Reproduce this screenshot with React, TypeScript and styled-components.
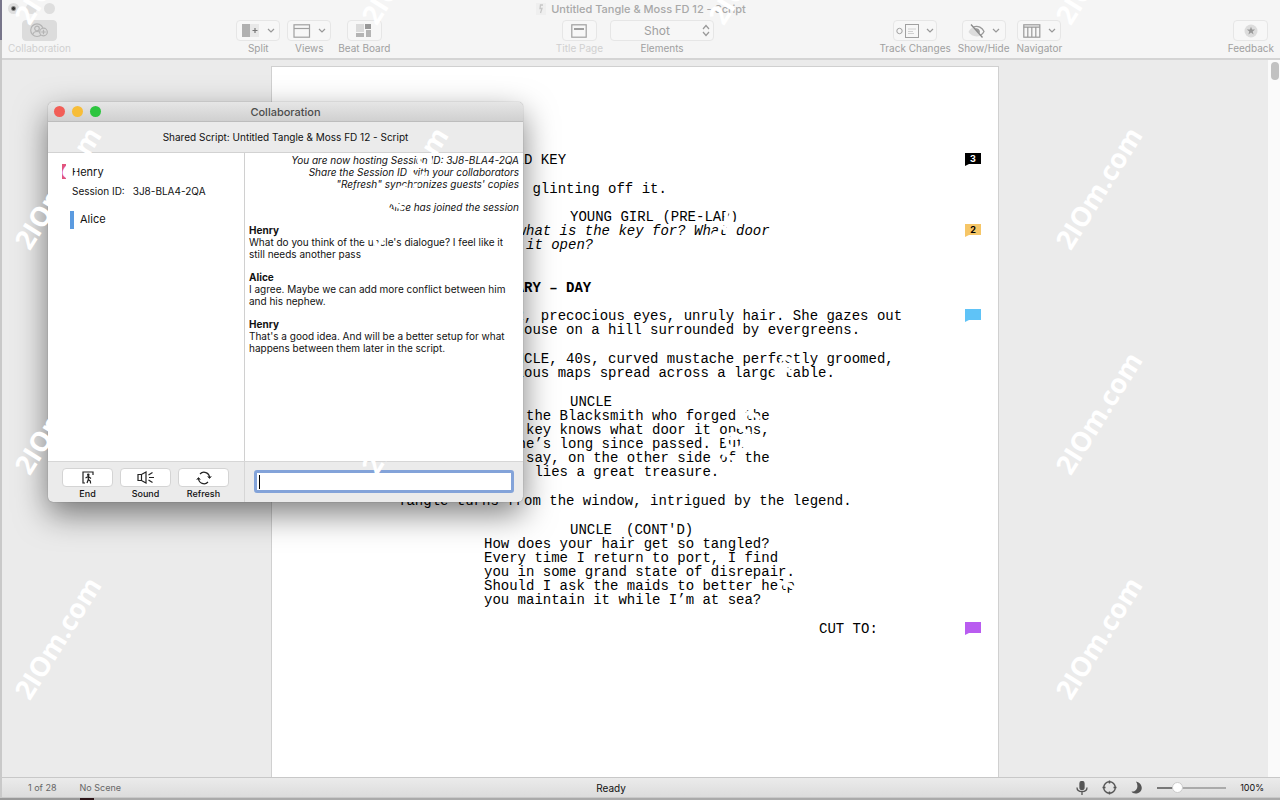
import React from "react";
import styled, { createGlobalStyle, css } from "styled-components";

const ui = `Inter, "Liberation Sans", sans-serif`;
const mono = `"Courier New", "Liberation Mono", monospace`;

const GlobalStyle = createGlobalStyle`
  *, *::before, *::after { box-sizing: border-box; }
  body { margin: 0; background: #a9a9a9; font-family: ${ui}; overflow: hidden; }
  button, input, select { font-family: inherit; margin: 0; }
`;

const Desktop = styled.div`
  position: relative;
  min-height: 100vh;
  display: flex;
  flex-direction: column;
  overflow: hidden;
  padding: 0 0 3px 2px;
  background: linear-gradient(90deg, #999 0 80px, #2c1417 80px 94px, #aaa 94px) bottom / 100% 2px no-repeat,
    linear-gradient(#77758a 0 40px, #c9c9c9 40px);
`;

/* ---------- main window chrome ---------- */

const Chrome = styled.header`
  background: #f5f5f5;
  border-bottom: 2px solid #d4d4d4;
  padding: 0 6px 0 6px;
  height: 60px;
`;

const TitleRow = styled.div`
  display: grid;
  grid-template-columns: 1fr auto 1fr;
  align-items: center;
  height: 17px;
  margin-bottom: 3px;
`;

const Lights = styled.div<{ $gap: number }>`
  display: flex;
  gap: ${(p) => p.$gap}px;
`;

const Light = styled.button<{ $color: string; $dot?: boolean }>`
  width: 11px;
  height: 11px;
  padding: 0;
  border: 0;
  border-radius: 50%;
  background: ${(p) => (p.$dot ? `radial-gradient(circle, #333 0 1px, ${p.$color} 3px)` : p.$color)};
`;

const WindowTitle = styled.h1`
  display: flex;
  align-items: center;
  gap: 5px;
  margin: 0;
  font-size: 11px;
  line-height: 16px;
  font-weight: 500;
  color: #a8a8a8;
`;

const Toolbar = styled.nav`
  display: flex;
  justify-content: space-between;
`;

const Group = styled.div<{ $gap: number }>`
  display: flex;
  gap: ${(p) => p.$gap}px;
`;

const Tool = styled.label<{ $dim?: boolean }>`
  display: flex;
  flex-direction: column;
  align-items: center;
  gap: 1px;
  font-size: 10px;
  line-height: 12px;
  color: ${(p) => (p.$dim ? "#d0d0d0" : "#a0a0a0")};
  white-space: nowrap;
`;

const ToolButton = styled.button<{ $wide?: boolean; $pressed?: boolean }>`
  display: flex;
  align-items: center;
  justify-content: center;
  gap: 7px;
  width: ${(p) => (p.$wide ? 44 : 35)}px;
  height: 21px;
  padding: 0;
  border: 1px solid ${(p) => (p.$pressed ? "#dcdcdc" : "#e6e6e6")};
  border-radius: 4px;
  background: ${(p) => (p.$pressed ? "#dcdcdc" : "#f7f7f7")};
`;

const SelectWrap = styled.span`
  position: relative;
  display: block;
  color: #a0a0a0;
`;

const Select = styled.select`
  appearance: none;
  display: block;
  width: 104px;
  height: 21px;
  padding: 0 10px 0 0;
  border: 1px solid #e6e6e6;
  border-radius: 4px;
  background: #f7f7f7;
  color: #a0a0a0;
  font-size: 12px;
  text-align: center;
  text-align-last: center;
`;

const SelectArrows = styled.svg`
  position: absolute;
  right: 4px;
  top: 4px;
  pointer-events: none;
`;

/* ---------- document ---------- */

const Workspace = styled.main`
  flex: 1;
  display: flex;
  background: #ebebeb;
`;

const Canvas = styled.div`
  flex: 1;
  display: flex;
  justify-content: center;
  padding-top: 6px;
`;

const Scroll = styled.div`
  width: 12px;
  padding: 2px 1px 0 3px;
  background: #fafafa;
`;

const Thumb = styled.div`
  height: 18px;
  border-radius: 4px;
  background: #c1c1c1;
`;

const Page = styled.article`
  width: 728px;
  padding: 86px 17px 0 0;
  background: #fff;
  border: 1px solid #d0d0d0;
  border-bottom: 0;
  font-family: ${mono};
  font-size: 14px;
  line-height: 14px;
  color: #000;
`;

type Kind = "action" | "heading" | "character" | "dialogue" | "lyric" | "transition";

const indent: Record<Kind, number> = {
  action: 126,
  heading: 126,
  character: 298,
  dialogue: 212,
  lyric: 212,
  transition: 547,
};

const Block = styled.div<{ $kind: Kind; $space?: number }>`
  display: flex;
  justify-content: space-between;
  padding-left: ${(p) => indent[p.$kind]}px;
  margin-top: ${(p) => p.$space ?? 0}px;
  ${(p) => p.$kind === "heading" && css`font-weight: 700;`}
  ${(p) => p.$kind === "lyric" && css`font-style: italic;`}
`;

const Lines = styled.p`
  display: flex;
  gap: 14px;
  margin: 0;
  white-space: pre;
`;

const Note = styled.button<{ $color: string; $ink?: string }>`
  width: 16px;
  height: 13px;
  padding: 0 0 2px;
  border: 0;
  background: ${(p) => p.$color};
  color: ${(p) => p.$ink ?? "#000"};
  clip-path: polygon(0 0, 100% 0, 100% 11px, 4px 11px, 0 100%);
  font: 700 9px/11px ${ui};
  text-align: center;
`;

/* ---------- status bar ---------- */

const Status = styled.footer`
  display: grid;
  grid-template-columns: 1fr auto 1fr;
  align-items: center;
  height: 20px;
  padding: 0 16px 0 26px;
  border-top: 1px solid #c8c8c8;
  background: linear-gradient(#ebebeb, #dcdcdc);
  font-size: 9px;
  line-height: 12px;
  color: #666;
`;

const StatusLeft = styled.div`
  display: flex;
  gap: 23px;
`;

const StatusMid = styled.div`
  margin-right: 70px;
  font-size: 10px;
  color: #111;
`;

const StatusRight = styled.div`
  display: flex;
  justify-content: flex-end;
  align-items: center;
  gap: 14px;
  color: #111;
`;

const IconButton = styled.button`
  display: flex;
  padding: 0;
  border: 0;
  background: none;
`;

const Zoom = styled.input`
  appearance: none;
  width: 69px;
  height: 12px;
  background: linear-gradient(90deg, #777 0 20px, #aaa 20px) center / 100% 2px no-repeat;
  &::-webkit-slider-thumb {
    appearance: none;
    width: 11px;
    height: 11px;
    border-radius: 50%;
    background: #fff;
    border: 1px solid #ccc;
  }
`;

/* ---------- collaboration window ---------- */

const Dialog = styled.section`
  position: absolute;
  left: 48px;
  top: 102px;
  width: 475px;
  border-radius: 5px;
  overflow: hidden;
  background: #ebebeb;
  color: #111;
  box-shadow: 0 0 1px rgba(0, 0, 0, 0.5), 0 12px 32px rgba(0, 0, 0, 0.5);
`;

const DialogBar = styled.div`
  display: grid;
  grid-template-columns: 1fr auto 1fr;
  align-items: center;
  height: 20px;
  padding: 0 6px;
  background: linear-gradient(#e6e6e6, #d0d0d0);
  border-bottom: 1px solid #bdbdbd;
`;

const DialogTitle = styled.h2`
  margin: 0;
  font-size: 11px;
  line-height: 16px;
  font-weight: 500;
  color: #4c4c4c;
`;

const Shared = styled.p`
  margin: 0;
  padding: 9px 0;
  border-bottom: 1px solid #d2d2d2;
  font-size: 10px;
  line-height: 12px;
  text-align: center;
`;

const Split = styled.div`
  display: grid;
  grid-template-columns: 197px 1fr;
`;

const People = styled.ul`
  margin: 0;
  padding: 11px 14px;
  list-style: none;
  background: #fff;
  border-right: 1px solid #d0d0d0;
`;

const Person = styled.li<{ $inset?: boolean }>`
  display: flex;
  gap: 6px;
  padding-left: ${(p) => (p.$inset ? 8 : 0)}px;
  margin-bottom: 13px;
  font-size: 11px;
  line-height: 16px;
`;

const Swatch = styled.span<{ $color: string; $tall?: boolean }>`
  width: 4px;
  height: ${(p) => (p.$tall ? 18 : 15)}px;
  background: ${(p) => p.$color};
`;

const Session = styled.div`
  display: flex;
  gap: 8px;
  margin-top: 4px;
  font-size: 10px;
  line-height: 14px;
`;

const Chat = styled.div`
  display: flex;
  flex-direction: column;
  gap: 11px;
  min-height: 308px;
  padding: 1px 4px;
  background: #fff;
  font-size: 10px;
  line-height: 12px;
`;

const Notice = styled.p`
  margin: 0;
  text-align: right;
  font-style: italic;
`;

const Message = styled.p`
  margin: 0;
  strong { display: block; font-weight: 700; }
`;

const Actions = styled.div`
  display: flex;
  gap: 7px;
  padding: 6px 14px 2px;
  border-top: 1px solid #d6d6d6;
  border-right: 1px solid #d6d6d6;
`;

const Action = styled.label`
  display: flex;
  flex-direction: column;
  align-items: center;
  gap: 1px;
  font-size: 9px;
  line-height: 12px;
  font-weight: 500;
`;

const ActionButton = styled.button`
  display: flex;
  align-items: center;
  justify-content: center;
  width: 51px;
  height: 19px;
  padding: 0;
  border: 1px solid #d4d4d4;
  border-radius: 4px;
  background: #fff;
`;

const Compose = styled.div`
  display: flex;
  padding: 8px 9px;
  border-top: 1px solid #d6d6d6;
`;

const MessageInput = styled.input`
  flex: 1;
  min-width: 0;
  height: 23px;
  padding: 0 4px;
  border: 3px solid #83a3d9;
  border-radius: 3px;
  outline: 0;
  background: linear-gradient(#000, #000) 2px center / 1px 14px no-repeat #fff;
  caret-color: transparent;
  font-size: 11px;
`;

/* ---------- watermark ---------- */

const Marks = styled.div`
  position: absolute;
  inset: -150px 0 0 -116px;
  display: grid;
  grid-template-columns: repeat(4, 347px);
  grid-auto-rows: 225px;
  place-items: center;
  overflow: hidden;
  pointer-events: none;
`;

const Mark = styled.span`
  font: 700 27px/32px "Open Sans", sans-serif;
  color: #fff;
  transform: rotate(-58deg);
`;

/* ---------- icons ---------- */

const Chevron = () => (
  <svg width="8" height="5" viewBox="0 0 8 5" fill="none" stroke="#999" strokeWidth="1.2">
    <path d="M1 1l3 3 3-3" />
  </svg>
);

const CollabIcon = () => (
  <svg width="20" height="15" viewBox="0 0 20 15" fill="none" stroke="#b4b4b4" strokeWidth="1.2">
    <circle cx="8" cy="7.2" r="6.300" />
    <circle cx="8" cy="5.500" r="2.300" />
    <path d="M4 11.500c0.500-4 7.500-4 8 0" />
    <circle cx="14.500" cy="9" r="3.800" fill="#dcdcdc" />
    <path d="M14.500 6.800v4.400M12.300 9h4.400" />
  </svg>
);

const SplitIcon = () => (
  <svg width="18" height="14" viewBox="0 0 18 14">
    <rect x="0" y="0" width="8" height="13" fill="#b0b0b0" />
    <rect x="8" y="0" width="9" height="13" fill="#e8e8e8" />
    <path d="M10.500 6.500h5M13 4v5" stroke="#777" strokeWidth="1.200" />
  </svg>
);

const ViewsIcon = () => (
  <svg width="18" height="14" viewBox="0 0 18 14" fill="none" stroke="#a0a0a0" strokeWidth="1.200">
    <rect x="1" y="0.800" width="15.500" height="12.400" />
    <path d="M1 4.500h15.500" />
  </svg>
);

const BoardIcon = () => (
  <svg width="16" height="14" viewBox="0 0 16 14">
    <rect x="0" y="0" width="8" height="8" fill="#dadada" />
    <rect x="9" y="0" width="6" height="5" fill="#999" />
    <rect x="0" y="9" width="8" height="4" fill="#b4b4b4" />
    <rect x="10" y="6" width="5" height="7" fill="#b4b4b4" />
  </svg>
);

const TitlePageIcon = () => (
  <svg width="16" height="14" viewBox="0 0 16 14" fill="none" stroke="#a0a0a0" strokeWidth="1.200">
    <rect x="0.800" y="0.800" width="14.400" height="12.400" />
    <path d="M3 5h10" stroke="#888" strokeWidth="1.600" />
  </svg>
);

const TrackIcon = () => (
  <svg width="23" height="14" viewBox="0 0 23 14" fill="none" stroke="#a0a0a0">
    <circle cx="3.500" cy="7" r="2.700" />
    <rect x="9.500" y="0.500" width="13" height="13" />
    <path d="M12 5h8M12 7.500h5M12 9.500h6" stroke="#d0d0d0" />
  </svg>
);

const EyeIcon = () => (
  <svg width="17" height="14" viewBox="0 0 17 14">
    <path d="M0.500 8C2 5 3.500 4 5 3.500L13 11.500C8 13.500 3 12 0.500 8z" fill="#dcdcdc" />
    <path d="M5.500 3C10 1 14.500 4 16 7.500c-0.700 1.500-2 3-3.500 3.800" fill="none" stroke="#999" strokeWidth="1.300" />
    <path d="M7 4.500c3-1.500 6 2 4.500 4.800z" fill="#999" />
    <path d="M3 0.500l11.500 13" stroke="#888" strokeWidth="1.300" />
  </svg>
);

const NavigatorIcon = () => (
  <svg width="18" height="14" viewBox="0 0 18 14" fill="none" stroke="#999" strokeWidth="1.200">
    <rect x="0.800" y="0.800" width="16" height="12.400" />
    <path d="M0.800 3.200h16M4.800 3v10M8.800 3v10M12.800 3v10" />
  </svg>
);

const StarIcon = () => (
  <svg width="14" height="14" viewBox="0 0 14 14">
    <circle cx="7" cy="7" r="6.500" fill="#dcdcdc" />
    <path d="M7 2.800l1.100 2.800h3L8.700 7.400l.9 3L7 8.600l-2.600 1.800.9-3-2.400-1.800h3z" fill="#999" />
  </svg>
);

const FileIcon = () => (
  <svg width="10" height="12" viewBox="0 0 10 12">
    <rect width="10" height="12" fill="#efefef" />
    <path d="M7 2H4.500L4 5.500h2L4.500 10" fill="none" stroke="#c8c8c8" strokeWidth="1.300" />
  </svg>
);

const EndIcon = () => (
  <svg width="12" height="13" viewBox="0 0 12 13" fill="none" stroke="#222" strokeWidth="1.200">
    <path d="M1 12.500V1h10v3M1 12h2" />
    <circle cx="6.300" cy="3.800" r="0.700" fill="#222" />
    <path d="M6.300 5v3.500l2 1.500.3 2.500M6.300 8.500L5 12M3.500 7l2.800-1.500L9 7.500" />
  </svg>
);

const SoundIcon = () => (
  <svg width="18" height="13" viewBox="0 0 18 13" fill="none" stroke="#222" strokeWidth="1.200">
    <path d="M1 3.500h3.500L9 1v11L4.500 9.500H1zM4.500 3.500v6M12 6.500h5M11.500 4l4-2.500M11.500 9l4 2.500" />
  </svg>
);

const RefreshIcon = () => (
  <svg width="16" height="14" viewBox="0 0 16 14" fill="none" stroke="#222" strokeWidth="1.200">
    <path d="M13.500 6.500A5.500 5.500 0 0 0 4 3M2.500 7.500A5.500 5.500 0 0 0 12 11" />
    <path d="M11.500 5.500l2 2 2-2M0.500 8.500l2-2 2 2" fill="#222" strokeWidth="0.600" />
  </svg>
);

const MicIcon = () => (
  <svg width="12" height="14" viewBox="0 0 12 14" fill="none" stroke="#555" strokeWidth="1.300">
    <rect x="4" y="0.500" width="4" height="8" rx="2" fill="#555" />
    <path d="M1 6.500c0 5.500 10 5.500 10 0M6 11v3" />
  </svg>
);

const TargetIcon = () => (
  <svg width="15" height="15" viewBox="0 0 15 15" fill="none" stroke="#555" strokeWidth="1.400">
    <circle cx="7.500" cy="7.500" r="5.800" />
    <path d="M7.500 0.500v3M7.500 11.500v3M0.500 7.500h3M11.500 7.500h3" />
  </svg>
);

const MoonIcon = () => (
  <svg width="12" height="13" viewBox="0 0 12 13">
    <path d="M5 .5c8 2 7.500 12-.5 12C2.500 12.500 1 11.500.5 10.500 6 11 8 5 5 .5z" fill="#555" />
  </svg>
);

const marks = Array.from({ length: 16 }, (_, i) => i);

export default function App() {
  return (
    <Desktop>
      <GlobalStyle />
      <Chrome>
        <TitleRow>
          <Lights $gap={7}>
            <Light $color="#dedede" $dot aria-label="Close" />
            <Light $color="#dedede" aria-label="Minimize" />
            <Light $color="#dedede" aria-label="Zoom" />
          </Lights>
          <WindowTitle>
            <FileIcon />
            Untitled Tangle &amp; Moss FD 12 - Script
          </WindowTitle>
        </TitleRow>
        <Toolbar>
          <Tool $dim>
            <ToolButton $pressed><CollabIcon /></ToolButton>
            Collaboration
          </Tool>
          <Group $gap={7}>
            <Tool><ToolButton $wide><SplitIcon /><Chevron /></ToolButton>Split</Tool>
            <Tool><ToolButton $wide><ViewsIcon /><Chevron /></ToolButton>Views</Tool>
            <Tool><ToolButton><BoardIcon /></ToolButton>Beat Board</Tool>
          </Group>
          <Group $gap={7}>
            <Tool $dim><ToolButton><TitlePageIcon /></ToolButton>Title Page</Tool>
            <Tool>
              <SelectWrap>
                <Select defaultValue="Shot"><option>Shot</option></Select>
                <SelectArrows width="8" height="13" viewBox="0 0 8 13" fill="none" stroke="#999" strokeWidth="1.2">
                  <path d="M1 5l3-3.500L7 5M1 8l3 3.500L7 8" />
                </SelectArrows>
              </SelectWrap>
              Elements
            </Tool>
          </Group>
          <Group $gap={7}>
            <Tool><ToolButton $wide><TrackIcon /><Chevron /></ToolButton>Track Changes</Tool>
            <Tool><ToolButton $wide><EyeIcon /><Chevron /></ToolButton>Show/Hide</Tool>
            <Tool><ToolButton $wide><NavigatorIcon /><Chevron /></ToolButton>Navigator</Tool>
          </Group>
          <Tool><ToolButton><StarIcon /></ToolButton>Feedback</Tool>
        </Toolbar>
      </Chrome>

      <Workspace>
        <Canvas>
          <Page>
            <Block $kind="action"><Lines>CLOSE ON THE OLD KEY</Lines><Note $color="#000" $ink="#fff">3</Note></Block>
            <Block $kind="action" $space={15}><Lines>Faint moonlight glinting off it.</Lines></Block>
            <Block $kind="character" $space={14}><Lines>YOUNG GIRL (PRE-LAP)</Lines></Block>
            <Block $kind="lyric">
              <Lines>{"So, what is the key for? What door\ndoes it open?"}</Lines>
              <Note $color="#f6c667">2</Note>
            </Block>
            <Block $kind="heading" $space={29}><Lines>INT. HOME LIBRARY – DAY</Lines></Block>
            <Block $kind="action" $space={14}>
              <Lines>{"TANGLE, aged 12, precocious eyes, unruly hair. She gazes out\ntoward a lighthouse on a hill surrounded by evergreens."}</Lines>
              <Note $color="#5fc3f7" aria-label="Note" />
            </Block>
            <Block $kind="action" $space={15}>
              <Lines>{"Behind them, UNCLE, 40s, curved mustache perfectly groomed,\npores over various maps spread across a large table."}</Lines>
            </Block>
            <Block $kind="character" $space={15}><Lines>UNCLE</Lines></Block>
            <Block $kind="dialogue">
              <Lines>{"Only the Blacksmith who forged the\nthis key knows what door it opens,\nbut he’s long since passed. But\nthey say, on the other side of the\ndoor, lies a great treasure."}</Lines>
            </Block>
            <Block $kind="action" $space={15}><Lines>Tangle turns from the window, intrigued by the legend.</Lines></Block>
            <Block $kind="character" $space={15}><Lines><span>UNCLE</span><span>(CONT'D)</span></Lines></Block>
            <Block $kind="dialogue">
              <Lines>{"How does your hair get so tangled?\nEvery time I return to port, I find\nyou in some grand state of disrepair.\nShould I ask the maids to better help\nyou maintain it while I’m at sea?"}</Lines>
            </Block>
            <Block $kind="transition" $space={15}><Lines>CUT TO:</Lines><Note $color="#b95cf0" aria-label="Note" /></Block>
          </Page>
        </Canvas>
        <Scroll><Thumb /></Scroll>
      </Workspace>

      <Status>
        <StatusLeft><span>1 of 28</span><span>No Scene</span></StatusLeft>
        <StatusMid>Ready</StatusMid>
        <StatusRight>
          <IconButton aria-label="Dictate"><MicIcon /></IconButton>
          <IconButton aria-label="Focus"><TargetIcon /></IconButton>
          <IconButton aria-label="Night mode"><MoonIcon /></IconButton>
          <Zoom type="range" min={0} max={100} defaultValue={26} aria-label="Zoom" />
          <span>100%</span>
        </StatusRight>
      </Status>

      <Dialog role="dialog" aria-label="Collaboration">
        <DialogBar>
          <Lights $gap={7}>
            <Light $color="#f25e57" aria-label="Close" />
            <Light $color="#f7bd38" aria-label="Minimize" />
            <Light $color="#2dc53f" aria-label="Zoom" />
          </Lights>
          <DialogTitle>Collaboration</DialogTitle>
        </DialogBar>
        <Shared>Shared Script: Untitled Tangle &amp; Moss FD 12 - Script</Shared>
        <Split>
          <People>
            <Person>
              <Swatch $color="#e2557b" />
              <div>
                Henry
                <Session><span>Session ID:</span><span>3J8-BLA4-2QA</span></Session>
              </div>
            </Person>
            <Person $inset><Swatch $color="#5b9be0" $tall />Alice</Person>
          </People>
          <Chat>
            <Notice>
              You are now hosting Session ID: 3J8-BLA4-2QA<br />
              Share the Session ID with your collaborators<br />
              "Refresh" synchronizes guests' copies
            </Notice>
            <Notice>Alice has joined the session</Notice>
            <Message><strong>Henry</strong>What do you think of the uncle's dialogue? I feel like it<br />still needs another pass</Message>
            <Message><strong>Alice</strong>I agree. Maybe we can add more conflict between him<br />and his nephew.</Message>
            <Message><strong>Henry</strong>That's a good idea. And will be a better setup for what<br />happens between them later in the script.</Message>
          </Chat>
          <Actions>
            <Action><ActionButton><EndIcon /></ActionButton>End</Action>
            <Action><ActionButton><SoundIcon /></ActionButton>Sound</Action>
            <Action><ActionButton><RefreshIcon /></ActionButton>Refresh</Action>
          </Actions>
          <Compose><MessageInput aria-label="Message" /></Compose>
        </Split>
      </Dialog>

      <Marks aria-hidden="true">
        {marks.map((i) => <Mark key={i}>2IOm.com</Mark>)}
      </Marks>
    </Desktop>
  );
}
